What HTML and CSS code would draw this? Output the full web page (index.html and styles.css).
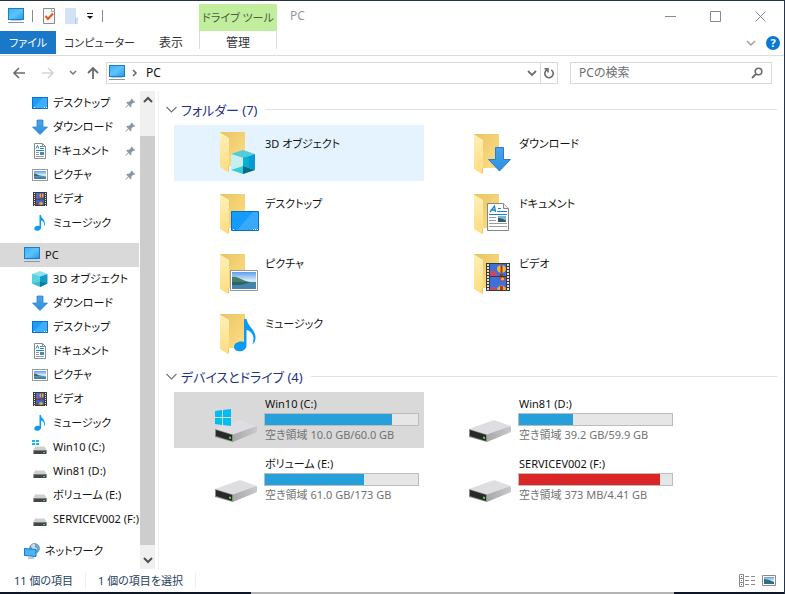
FILE: index.html
```
<!DOCTYPE html>
<html lang="ja">
<head>
<meta charset="utf-8">
<meta name="viewport" content="width=device-width, initial-scale=1">
<title>PC</title>
<link rel="stylesheet" href="styles.css">
</head>
<body>
<svg class="defs" aria-hidden="true">
  <defs>
    <linearGradient id="screen" x1="0" y1="0" x2="1" y2="1"><stop offset="0" stop-color="#3bb4fb"/><stop offset=".5" stop-color="#5cc4fd"/><stop offset="1" stop-color="#2494e6"/></linearGradient>
    <linearGradient id="folder-back" x1="0" y1="0" x2="1" y2="1"><stop offset="0" stop-color="#e8c462"/><stop offset="1" stop-color="#ffdf88"/></linearGradient>
    <linearGradient id="folder-front" x1="0" y1="0" x2="0" y2="1"><stop offset="0" stop-color="#fff0b8"/><stop offset="1" stop-color="#ffdc80"/></linearGradient>
    <linearGradient id="sky" x1="0" y1="0" x2="0" y2="1"><stop offset="0" stop-color="#5b9df0"/><stop offset=".5" stop-color="#d8ecf8"/><stop offset="1" stop-color="#8fbcd8"/></linearGradient>
    <linearGradient id="metal" x1="0" y1="0" x2="1" y2="0"><stop offset="0" stop-color="#a8a8aa"/><stop offset="1" stop-color="#c9c9cb"/></linearGradient>
    <linearGradient id="arrow" x1="0" y1="0" x2="0" y2="1"><stop offset="0" stop-color="#4aa4ee"/><stop offset="1" stop-color="#2d8ee0"/></linearGradient>

    <symbol id="pc" viewBox="0 0 16 16"><rect x=".5" y=".5" width="15" height="11" fill="url(#screen)" stroke="#1c7cc4"/><path d="M2.500 12.500h11" stroke="#c3ced8"/><path d="M0 14.500h16" stroke="#7f9bb0"/></symbol>
    <symbol id="desktop" viewBox="0 0 16 16"><rect x=".5" y="2.500" width="15" height="11" fill="#1c9dfb" stroke="#0b74c6"/><path d="M1 13 11 3h4v10z" fill="#3dadfc"/><path d="M2 12.500h1m9 0h1m1 0h1" stroke="#d9f0ff"/></symbol>
    <symbol id="down" viewBox="0 0 16 16"><path d="M5 1h6v7h4.500L8 15.500.5 8H5z" fill="url(#arrow)" stroke="#2a7cc4" stroke-width=".7"/></symbol>
    <symbol id="doc" viewBox="0 0 16 16"><path d="M2.500.5h8l3 3v12h-11z" fill="#fff" stroke="#8b8b8b"/><path d="M10.500.5v3h3" fill="none" stroke="#8b8b8b"/><path d="m4 5.500 1.500-3 1.200 3M8 3.500h2M8 5.500h4M4 7.500h8" fill="none" stroke="#1c88d2"/><path d="M4 9.500h3M4 11.500h3M4 13.500h8" stroke="#909aa2"/><path d="M8 9h4v3H8z" fill="#4b87a8"/></symbol>
    <symbol id="pic" viewBox="0 0 16 16"><rect x=".5" y="2.500" width="15" height="11" fill="#fff" stroke="#9a9a9a"/><path d="M2 4h12v8H2z" fill="url(#sky)"/><path d="M2 6.500c2-.5 3 1.500 6 2l6 1H2z" fill="#38706a"/><path d="M2 9.500h12V12H2z" fill="#4381a8"/></symbol>
    <symbol id="video" viewBox="0 0 16 16"><path d="M1 1h14v14H1z" fill="#3b3b3b"/><path d="M2.500 2v13M13.500 2v13" stroke="#e4e4e4" stroke-dasharray="1 1"/><path d="M4 2h8v5.500H4z" fill="#3f73d8"/><path d="M4 8.500h8V14H4z" fill="#3566cc"/><circle cx="9.500" cy="4.500" r="2" fill="#e7b42c"/><path d="M9 2.500h1v4H9z" fill="#c93232"/><path d="M4 5.500 7 6v1.500H4z" fill="#d4455a"/><path d="M8 8.500h2L9 10z" fill="#d63c2e"/><circle cx="9" cy="12.500" r="1.800" fill="#d8a22c"/><path d="M4 12.500h2V14H4z" fill="#a63556"/></symbol>
    <symbol id="music" viewBox="0 0 16 16"><path d="M7.500 0h1.300c.5 3.600 4.700 4.200 4.200 10.500h-.7C12.500 7.800 11 6 9.100 5.600v6.800c0 3.800-6.900 4.600-6.900 1.200 0-2.200 3-3.500 5.300-2.600z" fill="#0f9bf5"/></symbol>
    <symbol id="cube" viewBox="0 0 16 16"><path d="m0 3 8-3 7.500 3L8 5.500z" fill="#8fe2ec"/><path d="M0 3l8 2.500V16l-8-3.500z" fill="#35c0d2"/><path d="M15.500 3 8 5.500V16l7.500-3.500z" fill="#159cc6"/><path d="M0 3l8 2.500v5L0 12.500z" fill="#5cd1de"/><path d="m8 10.500 7.500 2L8 16z" fill="#087e95"/></symbol>
    <symbol id="drive" viewBox="0 0 16 16"><path d="m3 7.500h9.500l2 3.500h-13z" fill="#cfcfd1"/><path d="M1.500 11h13v4h-13z" fill="#454545"/><path d="M1.500 11.500h13" stroke="#7d7d7d"/><path d="M11 13h2v1h-2z" fill="#46e03c"/></symbol>
    <symbol id="osdrive" viewBox="0 0 16 16"><use href="#drive"/><path d="M0 1h3v2H0zM4 1h3v2H4zM0 4h3v2H0zM4 4h3v2H4z" fill="#12b5ee"/></symbol>
    <symbol id="net" viewBox="0 0 16 16"><circle cx="10.500" cy="5.500" r="5" fill="#6aa6d0" stroke="#4d87b2" stroke-width=".6"/><path d="M7 3c2-3 5-2 4 0s2 1 2 3-2 1-3 3" fill="#c3deee"/><path d="M.5 5.500 12 6.500v7l-11.500-1z" fill="#49b5f8" stroke="#1b79bd"/><path d="M4 15h6" stroke="#7998ac"/></symbol>
    <symbol id="pin" viewBox="0 0 12 12"><path d="m7 1 4 4-1 1-1-.3-2 2v2L6 10.500 3.800 8.300 1 11.200l-.6-.6 2.900-2.900L1.300 5.500 2.500 4.600h2l2-2L6.200 1.800z" fill="#8b98a4"/></symbol>

    <symbol id="folder" viewBox="0 0 48 48"><path d="M8 3h25v34l-17 0z" fill="url(#folder-back)"/><path d="M8 3.500 17 9v28l-1 6-8-5z" fill="url(#folder-front)"/><path d="M16 37h1v5l-1 1z" fill="#e8c870"/></symbol>
    <symbol id="big-cube" viewBox="0 0 48 48"><use href="#folder"/><path d="m19 25 12-4 12 4-12 4z" fill="#55cbd9"/><path d="M19 25v16l12-4v-8z" fill="#c8eff0"/><path d="M43 25v16l-12-4v-8z" fill="#0799d6"/><path d="M31 29v8l6 2V27z" fill="#00b4d0"/><path d="m19 41 12-4 12 4-12 4z" fill="#37cbd8"/><path d="m31 37 12 4-12 4z" fill="#086c80"/></symbol>
    <symbol id="big-desktop" viewBox="0 0 48 48"><g transform="translate(0 2)"><use href="#folder"/><path d="M19.500 20.500h27v19h-27z" fill="#149cfb" stroke="#086fbd"/><path d="m25 39 16-18h5v18z" fill="#38a9fc"/><path d="M21 38.500h1m19 0h1m1 0h1m1 0h1" stroke="#fff"/></g></symbol>
    <symbol id="big-down" viewBox="0 0 48 48"><g transform="translate(0 2)"><use href="#folder"/></g><path d="M29.500 18.500h8v12h7L33.500 42 22.500 30.500h7z" fill="url(#arrow)" stroke="#2a7cc4"/></symbol>
    <symbol id="big-doc" viewBox="0 0 48 48"><g transform="translate(0 2)"><use href="#folder"/></g><g transform="translate(0 1)"><path d="M21.500 13.500h16l5 5v22h-21z" fill="#fff" stroke="#858585"/><path d="M37.500 13.500v5h5" fill="#eee" stroke="#858585"/><path d="m24 22 4.500-6 1 6m-4-2h4" fill="none" stroke="#1683cb" stroke-width="1.300"/><path d="M32 18.500h3M31 21.500h10M23 24.500h18" stroke="#1683cb"/><path d="M23 27.500h7M23 30.500h7M23 33.500h18M23 36.500h18" stroke="#9a9fa4"/><path d="M32 26h8v6h-8z" fill="#7cb4e0"/><path d="M32 28q5 0 8 3v1h-8z" fill="#31605c"/></g></symbol>
    <symbol id="big-pic" viewBox="0 0 48 48"><g transform="translate(0 2)"><use href="#folder"/><path d="M18.500 19.500h27v20h-27z" fill="#fff" stroke="#969696"/><path d="M20 21h24v17H20z" fill="url(#sky)"/><path d="M20 26c4-1 6 1 9 2s5 3 15 4H20z" fill="#477f61"/><path d="M20 31h24v7H20z" fill="#4684aa"/><path d="M20 31h19l-10 3h-9z" fill="#2c6170"/></g></symbol>
    <symbol id="big-video" viewBox="0 0 48 48"><g transform="translate(0 2)"><use href="#folder"/><path d="M20 12h24v28H20z" fill="#383838"/><path d="M22 13v27M42 13v27" stroke="#e2e2e2" stroke-width="2" stroke-dasharray="2 1"/><path d="M24 13h16v12H24zM24 26h16v13H24z" fill="#3c70dd"/><path d="M24 20q3-2 7 2v3h-7z" fill="#c84a62"/><ellipse cx="35.500" cy="18" rx="4.500" ry="4" fill="#edbd28"/><path d="M34.500 14h2v8h-2z" fill="#b62f31"/><path d="M34 23h3v2h-3z" fill="#824222"/><path d="M33 26h7l-3 5h-1z" fill="#d73a32"/><circle cx="36.500" cy="28" r="1.500" fill="#edbd28"/><path d="M24 37q3-2 6 0v2h-6z" fill="#c84a62"/><path d="M31 39c0-6 9-6 9 0z" fill="#e7b02a"/><path d="M34 35h3v4h-3z" fill="#c7342e"/></g></symbol>
    <symbol id="big-music" viewBox="0 0 48 48"><g transform="translate(0 2)"><use href="#folder"/><path d="M32 8h2.500C36 16 44 19 43.500 27c0 3-1 5-3 6 3-8-1-13-6-14v15c0 8-12.500 8-12.500 2 0-4 5-6.500 10-5z" fill="#0b9bf4"/></g></symbol>
    <symbol id="big-drive" viewBox="0 0 48 48"><path d="M3 33 28 24l17 6-23 9z" fill="#dedee2"/><path d="M21 38.500 45 30v6L21 46z" fill="url(#metal)"/><path d="M3 33l18 5.500V46L3 41z" fill="#898989"/><path d="m4 34 16 5v6L4 40z" fill="#292929"/><path d="m17 40.500 2 .5v2l-2-.5z" fill="#38e53b"/></symbol>
    <symbol id="big-osdrive" viewBox="0 0 48 48"><use href="#big-drive"/><path d="m3 15 7-1v7H3zM11 14l8-1v8h-8zM3 22h7v7l-7-1zM11 22h8v8l-8-1z" fill="#00bcf2"/></symbol>
  </defs>
</svg>

<div class="window">
  <header class="titlebar">
    <div class="quick">
      <svg class="i16"><use href="#pc"/></svg>
      <span class="bar-sep"></span>
      <button class="plain" aria-label="プロパティ"><svg class="i16" viewBox="0 0 16 16"><path d="M2.500.5h11v15h-11z" fill="#f8f8f8" stroke="#8c8c8c"/><path d="M10.500.5v3h3" fill="none" stroke="#aaa"/><path d="m4.500 8 2.500 3 5-5.500" fill="none" stroke="#e2571f" stroke-width="2"/></svg></button>
      <button class="plain" aria-label="新しいフォルダー"><svg width="13" height="16" viewBox="0 0 13 16"><path d="M0 0h11v9h2v7H0z" fill="#d4e2f5"/><path d="M10.500 10v6" stroke="#b4c8e0"/></svg></button>
      <button class="plain small" aria-label="カスタマイズ"><svg width="8" height="8" viewBox="0 0 8 8"><path d="M1 1.500h6" stroke="#111"/><path d="M1 4h6L4 7z" fill="#111"/></svg></button>
      <span class="bar-sep"></span>
    </div>
    <div class="tool-title">ドライブ ツール</div>
    <h1 class="title">PC</h1>
    <div class="controls">
      <button class="plain" aria-label="最小化"><svg width="11" height="11"><path d="M0 5.500h11" stroke="#8a8a8a"/></svg></button>
      <button class="plain" aria-label="最大化"><svg width="11" height="11"><path d="M.5.500h10v10H.5z" fill="none" stroke="#8a8a8a"/></svg></button>
      <button class="plain" aria-label="閉じる"><svg width="11" height="11"><path d="m.5.500 10 10m0-10-10 10" stroke="#8a8a8a"/></svg></button>
    </div>
  </header>

  <nav class="ribbon">
    <a class="tab file" href="#">ファイル</a>
    <a class="tab computer" href="#">コンピューター</a>
    <a class="tab view" href="#">表示</a>
    <a class="tab manage" href="#">管理</a>
    <div class="ribbon-right">
      <button class="plain" aria-label="リボンの展開"><svg width="10" height="8"><path d="m1 2 4 4 4-4" fill="none" stroke="#9a9a9a" stroke-width="1.300"/></svg></button>
      <button class="help" aria-label="ヘルプ">?</button>
    </div>
  </nav>

  <div class="address-row">
    <div class="history">
      <button class="plain" aria-label="戻る"><svg width="14" height="12"><path d="M13 6H2m5-5L2 6l5 5" fill="none" stroke="#6b6b6b" stroke-width="1.600"/></svg></button>
      <button class="plain" aria-label="進む"><svg width="14" height="12"><path d="M1 6h11M7 1l5 5-5 5" fill="none" stroke="#d3d3d3" stroke-width="1.600"/></svg></button>
      <button class="plain recent" aria-label="最近表示した場所"><svg width="8" height="6"><path d="m1 1 3 3 3-3" fill="none" stroke="#777" stroke-width="1.500"/></svg></button>
      <button class="plain" aria-label="上へ"><svg width="14" height="14"><path d="M7 13V2M2 7l5-5 5 5" fill="none" stroke="#6b6b6b" stroke-width="1.800"/></svg></button>
    </div>
    <div class="address">
      <svg class="i16"><use href="#pc"/></svg>
      <svg width="6" height="8"><path d="m1 1 3 3-3 3" fill="none" stroke="#666" stroke-width="1.500"/></svg>
      <span class="path">PC</span>
      <button class="plain" aria-label="以前の場所"><svg width="10" height="8"><path d="m1 2 4 4 4-4" fill="none" stroke="#707070" stroke-width="1.800"/></svg></button>
      <button class="plain refresh" aria-label="更新"><svg width="12" height="12"><path d="M4 2.800A4.200 4.200 0 1 0 8.200 2.900M1.500 1.700H5V5.500" fill="none" stroke="#6b6b6b" stroke-width="1.600"/></svg></button>
    </div>
    <form class="search">
      <input type="text" aria-label="PCの検索" placeholder="PCの検索">
      <button class="plain" type="button" aria-label="検索"><svg width="12" height="12"><circle cx="7.500" cy="4.500" r="3.300" fill="none" stroke="#6b6b6b" stroke-width="1.600"/><path d="M5 7 1 11" stroke="#6b6b6b" stroke-width="1.800"/></svg></button>
    </form>
  </div>

  <div class="body">
    <nav class="side">
      <ul class="tree">
        <li><a href="#"><svg class="i16"><use href="#desktop"/></svg><span>デスクトップ</span><svg class="pin"><use href="#pin"/></svg></a></li>
        <li><a href="#"><svg class="i16"><use href="#down"/></svg><span>ダウンロード</span><svg class="pin"><use href="#pin"/></svg></a></li>
        <li><a href="#"><svg class="i16"><use href="#doc"/></svg><span>ドキュメント</span><svg class="pin"><use href="#pin"/></svg></a></li>
        <li><a href="#"><svg class="i16"><use href="#pic"/></svg><span>ピクチャ</span><svg class="pin"><use href="#pin"/></svg></a></li>
        <li><a href="#"><svg class="i16"><use href="#video"/></svg><span>ビデオ</span></a></li>
        <li><a href="#"><svg class="i16"><use href="#music"/></svg><span>ミュージック</span></a></li>
        <li class="root"><a class="current" href="#"><svg class="i16"><use href="#pc"/></svg><span>PC</span></a></li>
        <li><a href="#"><svg class="i16"><use href="#cube"/></svg><span>3D オブジェクト</span></a></li>
        <li><a href="#"><svg class="i16"><use href="#down"/></svg><span>ダウンロード</span></a></li>
        <li><a href="#"><svg class="i16"><use href="#desktop"/></svg><span>デスクトップ</span></a></li>
        <li><a href="#"><svg class="i16"><use href="#doc"/></svg><span>ドキュメント</span></a></li>
        <li><a href="#"><svg class="i16"><use href="#pic"/></svg><span>ピクチャ</span></a></li>
        <li><a href="#"><svg class="i16"><use href="#video"/></svg><span>ビデオ</span></a></li>
        <li><a href="#"><svg class="i16"><use href="#music"/></svg><span>ミュージック</span></a></li>
        <li><a href="#"><svg class="i16"><use href="#osdrive"/></svg><span>Win10 (C:)</span></a></li>
        <li><a href="#"><svg class="i16"><use href="#drive"/></svg><span>Win81 (D:)</span></a></li>
        <li><a href="#"><svg class="i16"><use href="#drive"/></svg><span>ボリューム (E:)</span></a></li>
        <li><a href="#"><svg class="i16"><use href="#drive"/></svg><span>SERVICEV002 (F:)</span></a></li>
        <li class="root"><a href="#"><svg class="i16"><use href="#net"/></svg><span>ネットワーク</span></a></li>
      </ul>
      <div class="scroll">
        <button class="plain" aria-label="上へスクロール"><svg width="10" height="8"><path d="m1 6 4-4 4 4" fill="none" stroke="#505050" stroke-width="2"/></svg></button>
        <div class="track"><div class="thumb"></div></div>
        <button class="plain" aria-label="下へスクロール"><svg width="10" height="8"><path d="m1 2 4 4 4-4" fill="none" stroke="#505050" stroke-width="2"/></svg></button>
      </div>
    </nav>

    <main class="content">
      <section>
        <h2 class="group"><svg width="11" height="8"><path d="m.5 1 5 5 5-5" fill="none" stroke="#777" stroke-width="1.200"/></svg>フォルダー (7)</h2>
        <div class="tiles">
          <a class="tile hover" href="#"><svg class="i48"><use href="#big-cube"/></svg><span class="name">3D オブジェクト</span></a>
          <a class="tile" href="#"><svg class="i48"><use href="#big-down"/></svg><span class="name">ダウンロード</span></a>
          <a class="tile" href="#"><svg class="i48"><use href="#big-desktop"/></svg><span class="name">デスクトップ</span></a>
          <a class="tile" href="#"><svg class="i48"><use href="#big-doc"/></svg><span class="name">ドキュメント</span></a>
          <a class="tile" href="#"><svg class="i48"><use href="#big-pic"/></svg><span class="name">ピクチャ</span></a>
          <a class="tile" href="#"><svg class="i48"><use href="#big-video"/></svg><span class="name">ビデオ</span></a>
          <a class="tile" href="#"><svg class="i48"><use href="#big-music"/></svg><span class="name">ミュージック</span></a>
        </div>
      </section>
      <section>
        <h2 class="group"><svg width="11" height="8"><path d="m.5 1 5 5 5-5" fill="none" stroke="#777" stroke-width="1.200"/></svg>デバイスとドライブ (4)</h2>
        <div class="tiles">
          <a class="tile selected" href="#"><svg class="i48"><use href="#big-osdrive"/></svg><span class="drive"><span class="label">Win10 (C:)</span><span class="usage"><span class="fill" style="width:83%"></span></span><span class="label free">空き領域 10.0 GB/60.0 GB</span></span></a>
          <a class="tile" href="#"><svg class="i48"><use href="#big-drive"/></svg><span class="drive"><span class="label">Win81 (D:)</span><span class="usage"><span class="fill" style="width:35%"></span></span><span class="label free">空き領域 39.2 GB/59.9 GB</span></span></a>
          <a class="tile" href="#"><svg class="i48"><use href="#big-drive"/></svg><span class="drive"><span class="label">ボリューム (E:)</span><span class="usage"><span class="fill" style="width:65%"></span></span><span class="label free">空き領域 61.0 GB/173 GB</span></span></a>
          <a class="tile" href="#"><svg class="i48"><use href="#big-drive"/></svg><span class="drive"><span class="label">SERVICEV002 (F:)</span><span class="usage"><span class="fill full" style="width:92%"></span></span><span class="label free">空き領域 373 MB/4.41 GB</span></span></a>
        </div>
      </section>
    </main>
  </div>

  <footer class="status">
    <span class="cell">11 個の項目</span>
    <span class="cell">1 個の項目を選択</span>
    <div class="modes">
      <button class="plain" aria-label="詳細"><svg width="16" height="13"><path d="M.5.500h4v12h-4zM.5 4.500h4m-4 4h4M6 2.500h4m2 0h4m-10 4h4m2 0h4m-10 4h4m2 0h4" fill="none" stroke="#8a8a8a"/><path d="M2 2h1v1H2z" fill="#555"/><path d="M2 6h1v1H2z" fill="#1684d8"/><path d="M2 10h1v1H2z" fill="#d33"/></svg></button>
      <button class="plain" aria-label="大きいアイコン"><svg width="14" height="11" viewBox="0 0 14 11"><path d="M.5.500h13v10H.5z" fill="#fff" stroke="#8a8a8a"/><path d="M2 2h10v7H2z" fill="url(#sky)"/><path d="M2 4q4 0 10 3v2H2z" fill="#326e80"/></svg></button>
    </div>
  </footer>
  <div class="edge"></div>
</div>
</body>
</html>
```
FILE: styles.css
```
* { box-sizing: border-box; }

body {
  margin: 0;
  background: #fff;
  color: #111;
  font: 12px/16px "Noto Sans", "Noto Sans CJK JP", sans-serif;
  font-feature-settings: "palt";
}

a { color: inherit; text-decoration: none; }
h1, h2, ul { margin: 0; padding: 0; font-weight: 400; list-style: none; }
svg { display: block; flex: none; }
.defs { position: absolute; width: 0; height: 0; }
.i16 { width: 16px; height: 16px; }
.i48 { width: 48px; height: 48px; }

.plain {
  display: flex;
  align-items: center;
  justify-content: center;
  padding: 0;
  border: 0;
  background: none;
}

.window {
  display: flex;
  flex-direction: column;
  min-height: 100vh;
  border-top: 1px solid #26344a;
  border-right: 1px solid #26344a;
}

.titlebar { display: flex; height: 30px; }
.quick {
  display: flex;
  align-items: center;
  gap: 8px;
  width: 199px;
  padding-left: 8px;
}
.quick .small { width: 8px; }
.bar-sep { width: 1px; height: 12px; background: #8a8a8a; }
.tool-title {
  width: 78px;
  margin-top: 3px;
  background: #c1ee9d;
  color: #4c5b42;
  font-size: 11px;
  line-height: 27px;
  text-align: center;
}
.title {
  flex: 1;
  padding-left: 13px;
  color: #999;
  font-size: 12px;
  line-height: 30px;
}
.controls { display: flex; padding-right: 1px; }
.controls .plain { width: 45px; }

.ribbon {
  display: flex;
  height: 25px;
  border-bottom: 1px solid #dcdcdc;
  line-height: 23px;
  text-align: center;
}
.tab { color: #333; }
.file { width: 56px; height: 23px; background: #1a78c9; color: #fff; font-size: 11px; }
.computer { width: 87px; font-size: 11px; }
.view { width: 56px; }
.manage {
  width: 78px;
  height: 18px;
  border: solid #dcdcdc;
  border-width: 0 1px;
}
.ribbon-right {
  display: flex;
  align-items: center;
  gap: 10px;
  margin-left: auto;
  padding-right: 4px;
}
.help {
  width: 14px;
  height: 14px;
  padding: 0;
  border: 0;
  border-radius: 50%;
  background: #0878d6;
  color: #fff;
  font: bold 11px/14px "Noto Sans", sans-serif;
}

.address-row {
  display: flex;
  align-items: flex-start;
  gap: 12px;
  height: 35px;
  padding: 6px 12px 0 0;
}
.history {
  display: flex;
  align-items: center;
  justify-content: space-between;
  width: 88px;
  height: 22px;
  margin-left: 12px;
  margin-right: -6px;
}
.history .recent { margin-right: -6px; }
.address, .search {
  display: flex;
  align-items: center;
  height: 22px;
  border: 1px solid #d9d9d9;
}
.address { flex: 1; padding-left: 2px; }
.address .i16 { margin-right: 7px; }
.path { flex: 1; padding-left: 8px; }
.refresh {
  width: 17px;
  height: 20px;
  margin-left: 3px;
  border-left: 1px solid #d9d9d9;
}
.search { width: 202px; padding: 0 8px; }
.search input {
  flex: 1;
  min-width: 0;
  padding: 0;
  border: 0;
  outline: 0;
  background: none;
  font: inherit;
}
.search input::placeholder { color: #6d6d6d; opacity: 1; }

.body { display: flex; flex: 1; }
.side {
  display: flex;
  width: 159px;
  border-right: 1px solid #f2f2f2;
}
.tree { width: 139px; font-size: 11px; }
.tree a {
  display: flex;
  align-items: center;
  gap: 5px;
  height: 24px;
  padding-left: 32px;
  white-space: nowrap;
}
.tree .root { margin-top: 8px; }
.tree .root a { padding-left: 24px; }
.tree .current { background: #d9d9d9; }
.pin { width: 11px; height: 12px; margin: 0 3px 0 auto; }
.scroll {
  display: flex;
  flex-direction: column;
  width: 15px;
  margin-left: 1px;
  background: #f0f0f0;
}
.scroll .plain { height: 18px; }
.track { flex: 1; padding: 27px 0 6px; }
.thumb { height: 100%; background: #cdcdcd; }

.content { flex: 1; padding: 3px 7px 0 7px; }
.group {
  display: flex;
  align-items: center;
  gap: 4px;
  height: 31px;
  color: #1e3287;
  font-size: 13px;
}
.group::after {
  content: "";
  flex: 1;
  height: 1px;
  margin-left: 4px;
  background: #e2e2e2;
}
.tiles {
  display: grid;
  grid-template-columns: repeat(auto-fill, 250px);
  gap: 4px;
  padding-left: 8px;
}
.tile {
  display: flex;
  gap: 4px;
  height: 56px;
  padding: 4px 0 4px 38px;
  font-size: 11px;
}
.hover { background: #e5f3ff; }
.selected { background: #d9d9d9; }
.name { padding-top: 7px; padding-left: 1px; }
.drive { display: flex; flex-direction: column; width: 155px; }
.label { padding-left: 1px; }
.usage {
  height: 13px;
  margin: 1px 0;
  border: 1px solid #bcbcbc;
  background: #e6e6e6;
}
.fill { display: block; height: 100%; background: #26a0da; }
.full { background: #da2626; }
.free { color: #727272; }

.status {
  display: flex;
  align-items: center;
  height: 23px;
  padding-left: 2px;
  color: #26405e;
  font-size: 11px;
}
.cell { padding: 0 12px; border-right: 1px solid #f0f0f0; }
.modes { display: flex; gap: 7px; margin-left: auto; padding-right: 8px; }

.edge {
  height: 2px;
  background: linear-gradient(90deg, #0c1626 32%, #b4b4b4 32%, #b4b4b4 86%, #0c1626 86%);
}
```
